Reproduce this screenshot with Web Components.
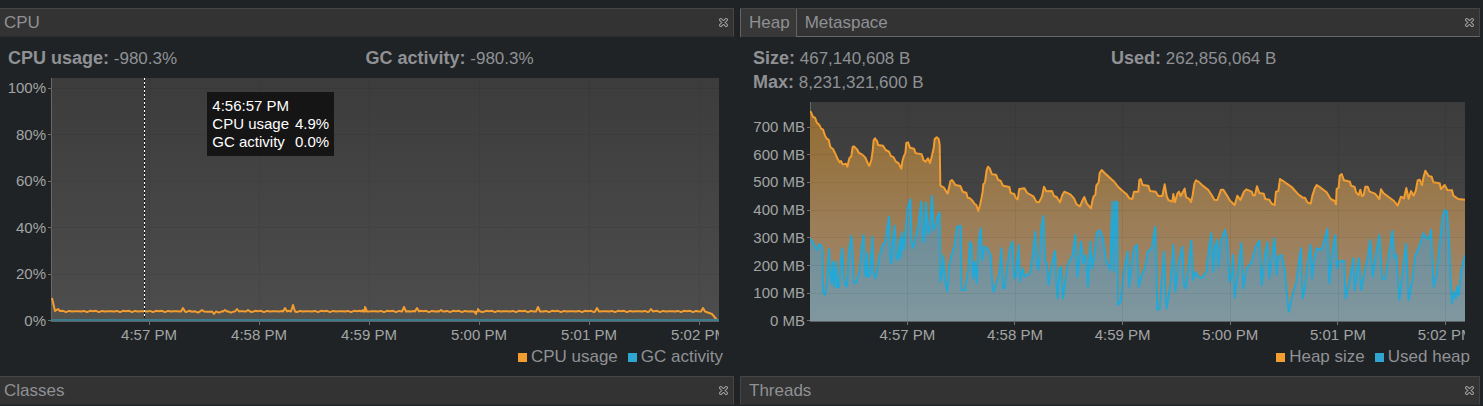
<!DOCTYPE html>
<html lang="en">
<head>
<meta charset="utf-8">
<title>Monitor</title>
<style>
  body {
    margin: 0;
    background: #1f2326;
    color: #8f9194;
    font-family: "Liberation Sans", Arial, sans-serif;
    font-size: 17px;
  }
</style>
</head>
<body>
<monitor-page></monitor-page>

<script>
/* Close mark in a panel header */
class CloseButton extends HTMLElement {
  constructor() {
    super();
    this.attachShadow({ mode: 'open' }).innerHTML = `
      <style>
        :host { display: block; }
        button { display: block; padding: 0; border: 0; background: none; cursor: pointer; }
        svg { display: block; width: 9px; height: 9px; margin-bottom: 1px; }
      </style>
      <button type="button" aria-label="Close">
        <svg viewBox="0 0 9 9" aria-hidden="true">
          <path d="M1.8 1.8 7.2 7.2M7.2 1.8 1.8 7.2" stroke="#a4a4a4" stroke-width="3.4" stroke-linecap="round"/>
          <path d="M1.8 1.8 7.2 7.2M7.2 1.8 1.8 7.2" stroke="#303030" stroke-width="1.5" stroke-linecap="round"/>
        </svg>
      </button>`;
  }
}
customElements.define('close-button', CloseButton);

/* A panel: header bar with a title or tabs, and a body */
class MonitorPanel extends HTMLElement {
  constructor() {
    super();
    const tabs = (this.getAttribute('tabs') || '').split(',').filter(Boolean);
    const title = tabs.length
      ? `<div class="tabs" role="tablist">${tabs.map((t, i) =>
          `<button type="button" role="tab" aria-selected="${i === 0}">${t}</button>`).join('')}</div>`
      : `<h2>${this.getAttribute('heading')}</h2>`;
    this.attachShadow({ mode: 'open' }).innerHTML = `
      <style>
        :host { display: flex; flex-direction: column; --pad: 8px; --end: 11px; --title: 4px; }
        :host([inset]) { --pad: 13px; --end: 10px; --title: 8px; }
        header {
          display: flex; align-items: center; justify-content: space-between;
          box-sizing: border-box; height: 29px; padding-right: 5px;
          background: #333; border: 1px solid #454545; border-bottom-color: #2b2d2e;
        }
        :host(:not([inset])) header { border-left: 0; }
        h2 { margin: 0; padding-left: var(--title); font: inherit; line-height: 27px; }
        header.tabbed { border-left: 0; border-bottom-color: #686868; }
        .tabs { display: flex; align-self: stretch; }
        .tabs button {
          padding: 0 6px 0 8px; border: 0; background: none; color: inherit; font: inherit; line-height: 27px;
        }
        .tabs button[aria-selected="true"] {
          margin-bottom: -1px; padding-bottom: 1px;
          background: #383838; border: 1px solid #646464; border-width: 0 1px;
        }
      </style>
      <header class="${tabs.length ? 'tabbed' : ''}">${title}<close-button></close-button></header>
      <slot></slot>`;
  }
}
customElements.define('monitor-panel', MonitorPanel);

/* Body of a panel: numbers, chart and legend stacked */
class PanelBody extends HTMLElement {
  constructor() {
    super();
    this.attachShadow({ mode: 'open' }).innerHTML = `
      <style>
        :host { display: flex; flex-direction: column; flex: 1; padding: 10px 0 9px; }
        .stats {
          display: grid; grid-template-columns: 1fr 1fr;
          padding: 0 11px 7px var(--pad);
        }
        .legend { display: flex; justify-content: flex-end; gap: 10px; padding-right: var(--end); }
      </style>
      <div class="stats"><slot name="stat"></slot></div>
      <slot></slot>
      <div class="legend"><slot name="key"></slot></div>`;
  }
}
customElements.define('panel-body', PanelBody);

class StatItem extends HTMLElement {
  constructor() {
    super();
    this.attachShadow({ mode: 'open' }).innerHTML = `
      <style>
        :host { display: block; line-height: 24px; white-space: nowrap; }
        b { font-size: 18px; line-height: 18px; }
      </style>
      <b>${this.getAttribute('label')}:</b> <slot></slot>`;
  }
}
customElements.define('stat-item', StatItem);

class LegendKey extends HTMLElement {
  constructor() {
    super();
    this.attachShadow({ mode: 'open' }).innerHTML = `
      <style>
        :host { display: flex; align-items: center; gap: 4px; line-height: 20px; }
        i { width: 9px; height: 9px; background: var(--swatch); }
      </style>
      <i></i><slot></slot>`;
  }
}
customElements.define('legend-key', LegendKey);

/* Values under the time cursor */
class ChartTip extends HTMLElement {
  constructor() {
    super();
    this.attachShadow({ mode: 'open' }).innerHTML = `
      <style>
        :host { display: block; padding: 5px; background: #151515; color: #fff; font-size: 15px; line-height: 18px; }
        table { border-collapse: collapse; white-space: nowrap; }
        caption { text-align: left; }
        th, td { padding: 0; font-weight: normal; text-align: left; }
        td { padding-left: 6px; text-align: right; }
      </style>
      <table>
        <caption>4:56:57 PM</caption>
        <tr><th scope="row">CPU usage</th><td>4.9%</td></tr>
        <tr><th scope="row">GC activity</th><td>0.0%</td></tr>
      </table>`;
  }
}
customElements.define('chart-tip', ChartTip);

const TIMES = ['4:57 PM', '4:58 PM', '4:59 PM', '5:00 PM', '5:01 PM', '5:02 PM'];

/* Each run of samples is [x offset, "x,y x,y ..."] in plot units */
const join = runs => runs.flatMap(([dx, pts]) => pts.trim().split(/\s+/).map(p => {
  const [x, y] = p.split(',').map(Number);
  return [x + dx, y - 21];
}));

const HEAP_SIZE = join([
  [-15, `15,48 18,52 24,66 30,68 36,84 42,88 48,100 54,104 60,122 66,132 71,134 76,156 84,162 92,178 98,192 104,202 108,198 113,208 119,207 123,206 127,215 133,190 139,183 143,156 147,154 156,163 162,174 172,179 181,188 188,204 193,213 199,195 203,168 206,135 210,130 217,140 219,150 234,152 242,165 252,170 257,182 266,187 272,199 281,205 289,221 292,199 297,182 301,175 304,144 309,142 315,158 327,161 332,175 350,178 356,196 362,200 369,190 375,204 379,190 386,160 389,132 395,127 401,132 404,150 406,272 417,278 428,296 432,278 436,259 441,255 447,263 451,270 466,273 473,290 484,293 488,308`],
  [480, `0,310 8,318 14,327 19,330 25,348 30,330 34,312 38,290 40,268 45,262 50,225 54,215 59,220 66,238 78,239 84,254 92,258 99,272 118,276 122,294 133,297 138,310 143,313 148,282 163,280 172,294 190,304 199,320 207,322 216,304 222,275 229,289 246,288 252,303 260,306 270,322 277,300 283,290 301,298 312,310 320,328 330,334 338,315 343,306 350,325 363,340 367,318 371,304 376,300 379,272 386,262 389,234 395,225 408,238 421,250 434,262 445,276 458,288 470,298 478,310 487,312 492,290`],
  [975, `0,290 10,290 13,255 17,252 23,270 40,272 45,288 62,290 70,303 82,303 89,268 95,303 100,315 112,320 115,297 120,322 127,296 132,290 137,303 149,281 153,306 163,312 168,321 173,300 178,266 183,256 193,262 203,272 220,285 230,300 238,314 247,315 258,284 265,284 275,300 286,318 299,330 307,302 316,315 327,290 334,283 350,290 355,302 360,300 366,274 373,294 386,296 391,312 403,314 410,326 419,330 423,290 430,288 435,252 450,262 470,276 488,296`],
  [1470, `0,302 8,308 15,308 22,322 32,326 37,302 45,278 50,270 62,278 80,292 92,312 104,318 108,328 110,282 116,278 119,242 125,237 132,256 150,260 153,272 164,276 168,292 176,300 181,284 186,304 191,300 196,275 203,275 209,290 225,296 238,312 243,283 250,294 262,303 282,318 293,332 303,305 312,310 319,279 326,311 333,288 341,302 347,288 353,256 359,254 366,270 371,245 376,227 386,243 395,245 400,262 419,265 423,282 434,270 442,285 456,286 460,302 475,312 495,314`],
]);

const HEAP_USED = join([
  [-15, `15,430 18,435 24,442 30,455 36,465 42,448 48,450 52,465 54,590 60,600 66,560 72,462 76,540 80,565 84,500 88,575 93,500 97,578 102,575 107,500 112,460 116,545 121,570 126,575 131,480 139,423 144,500 147,565 155,560 163,530 170,460 176,420 180,535 183,545 187,475 190,545 196,540 202,425 206,535 211,550 218,520 224,480 232,452 241,440 247,400 252,365 256,495 260,505 264,440 269,392 275,490 280,495 285,430 287,485 291,412 296,465 303,400 308,340 316,313 320,440 324,458 332,430 340,390 349,320 354,430 357,442 363,323 369,415 373,410 381,303 386,405 393,390 397,365 404,353 406,560 411,545 415,482 421,560 427,590 433,510 440,480 448,455 456,395 467,393 470,585 480,585 490,520`],
  [480, `0,440 5,450 9,550 14,500 20,565 26,440 32,400 37,495 43,455 52,460 62,480 68,580 71,590 80,560 88,535 94,460 99,580 104,580 111,520 120,460 127,440 133,550 138,545 146,450 150,560 158,520 164,545 180,535 188,480 196,410 200,500 205,525 210,470 214,400 220,363 225,495 230,505 236,570 243,520 255,468 259,560 263,610 269,520 274,515 279,610 286,560 293,510 308,480 316,420 322,545 328,490 333,440 340,505 347,480 354,575 361,440 366,520 375,470 380,415 388,405 398,425 408,495 421,525 427,320 432,530 436,320 442,322 444,630 452,620 460,540 473,470 478,575 490,470`],
  [975, `0,455 6,450 11,575 20,540 30,520 38,470 50,460 61,395 67,645 74,640 80,560 87,470 92,600 95,640 106,570 115,450 121,590 130,510 142,455 147,570 152,580 160,520 169,437 174,555 182,530 190,545 200,550 214,530 222,460 229,415 235,530 239,460 246,435 251,515 257,440 270,405 277,440 283,560 290,540 294,480 299,608 310,520 319,445 325,580 335,520 350,500 362,455 373,437 380,570 390,480 397,442 403,550 410,490 418,430 425,540 430,485 440,480 450,530 455,590 461,650 470,610 484,560 492,500`],
  [1470, `3,460 8,610 15,580 22,510 32,450 36,550 43,490 50,460 64,465 75,430 82,402 88,565 97,470 106,420 111,520 116,500 132,497 137,610 148,560 160,490 164,585 170,540 177,490 183,585 192,540 203,490 211,435 218,545 228,480 238,420 247,553 256,550 268,470 277,408 284,490 289,480 298,615 307,540 318,447 326,615 336,560 346,480 358,455 370,415 380,430 388,430 393,405 401,575 410,540 420,440 428,365 434,345 441,350 447,440 452,560 456,625 463,590 468,610 471,575 476,600 483,530 495,480`],
]);

/* Idle load with a few short bursts, x -> y in plot units */
const BURSTS = { 132: 230, 151: 232, 163: 236, 174: 232, 186: 231, 197: 232, 234: 230, 242: 227, 312: 232, 314: 229, 353: 229, 366: 230, 390: 232, 425: 236, 427: 231, 487: 229, 546: 230, 600: 231, 652: 230 };
const CPU_USAGE = (() => {
  const pts = [[1, 220], [4, 233], [7, 231], [9, 233]];
  for (let x = 12, k = 0; x < 656; x += 3, k++) {
    const near = Object.keys(BURSTS).some(b => Math.abs(b - x) < 3);
    const jitter = ((k * k * 7 + k * 3) % 11) / 11 - 0.5;
    if (!near) pts.push([x, 233.5 + jitter * 1.4 + (x > 140 && x < 185 ? 0.5 : 0)]);
  }
  for (const b in BURSTS) pts.push([+b - 2, 233.5], [+b, BURSTS[b]], [+b + 2, 233.5]);
  pts.sort((a, b) => a[0] - b[0]);
  pts.push([661, 236], [666, 242]);
  return pts;
})();

const CHARTS = {
  cpu: {
    w: 668, h: 243, top: 10, first: 98, step: 110, gutter: 51,
    y: ['100%', '80%', '60%', '40%', '20%', '0%'],
    series: [
      { id: 'usage', pts: CPU_USAGE, line: '#f19d30', from: '#4b4a48', to: '#55514c' },
      { id: 'gc', pts: [[0, 242], [668, 242]], line: '#3a7b8e', from: 'none', to: 'none' },
    ],
  },
  heap: {
    w: 1965, h: 657, top: 25, first: 292, step: 323, gutter: 70,
    y: ['700 MB', '600 MB', '500 MB', '400 MB', '300 MB', '200 MB', '100 MB', '0 MB'],
    series: [
      { id: 'size', pts: HEAP_SIZE, line: '#f19d30', from: '#926a2e', to: '#a38d78' },
      { id: 'used', pts: HEAP_USED, line: '#22a9d8', from: '#56808d', to: '#80979f' },
    ],
  },
};

class TimeChart extends HTMLElement {
  constructor() {
    super();
    const c = CHARTS[this.getAttribute('data')];
    const unit = c.w > 1000 ? 3 : 1;
    const top = c.top * unit;
    const rows = c.y.map((_, i) => top + (c.h - top) * i / (c.y.length - 1)).slice(0, -1);
    const cols = TIMES.map((_, i) => c.first + c.step * i);
    const grid = [...rows.map(y => `M0 ${y}H${c.w}`), ...cols.map(x => `M${x} 0V${c.h}`)].join('');
    const drawn = c.series.map(s => {
      const d = 'M' + s.pts.map(p => p.join(' ')).join('L');
      const last = s.pts[s.pts.length - 1][0];
      return `<linearGradient id="${s.id}" gradientUnits="userSpaceOnUse" x1="0" y1="0" x2="0" y2="${c.h}">
          <stop offset="0" stop-color="${s.from}"/><stop offset="1" stop-color="${s.to}"/></linearGradient>
        ${s.from === 'none' ? '' : `<path fill="url(#${s.id})" d="${d}L${last} ${c.h}L${s.pts[0][0]} ${c.h}Z"/>`}
        <path class="line" stroke="${s.line}" d="${d}"/>`;
    }).join('');
    const lead = (c.first - c.step / 2) / c.w * 100;
    const cell = c.step / c.w * 100;

    this.attachShadow({ mode: 'open' }).innerHTML = `
      <style>
        :host {
          display: grid; flex: 1; grid-template: minmax(219px, 1fr) auto / ${c.gutter}px 1fr;
          padding-right: 15px; color: #a3a5a5; font-size: 15px; line-height: 18px; white-space: nowrap;
        }
        .y {
          display: flex; flex-direction: column; justify-content: space-between;
          margin: ${c.top - 9}px 0 -9px;
        }
        .y span { display: flex; align-items: center; justify-content: flex-end; gap: 2px; }
        .y span::after { content: ""; width: 3px; height: 1px; background: #707272; }
        .plot {
          position: relative; min-width: 0;
          background: linear-gradient(#3c3c3c, #4d4d4d);
          box-shadow: inset 1px 0 #686868, 0 1px #5d6365;
        }
        svg { position: absolute; inset: 0; width: 100%; height: 100%; overflow: hidden; }
        path { vector-effect: non-scaling-stroke; }
        .line { fill: none; stroke-width: 2; stroke-linejoin: round; }
        .grid { fill: none; stroke: #000; stroke-opacity: .06; shape-rendering: crispEdges; }
        .x { grid-column: 2; display: flex; min-width: 0; overflow: hidden; padding-top: 1px; }
        .x::before { content: ""; flex: 0 0 ${lead}%; }
        .x span {
          flex: 0 0 ${cell}%; padding: 4px 0; line-height: 17px; text-align: center;
          background: linear-gradient(#707272, #707272) 50% 0 / 1px 3px no-repeat;
        }
        ::slotted(.cursor) {
          position: absolute; top: 0; bottom: 3px; left: 13.9%; width: 1px;
          background: repeating-linear-gradient(#fff 0 2px, #111 2px 4px);
        }
        ::slotted(chart-tip) { position: absolute; top: 14px; left: 23.4%; }
      </style>
      <div class="y">${c.y.map(t => `<span>${t}</span>`).join('')}</div>
      <div class="plot">
        <svg viewBox="0 0 ${c.w} ${c.h}" preserveAspectRatio="none" aria-hidden="true">
          ${drawn}<path class="grid" d="${grid}"/>
        </svg>
        <slot></slot>
      </div>
      <div class="x">${TIMES.map(t => `<span>${t}</span>`).join('')}</div>`;
  }
}
customElements.define('time-chart', TimeChart);

class MonitorPage extends HTMLElement {
  constructor() {
    super();
    this.attachShadow({ mode: 'open' }).innerHTML = `
      <style>
        :host {
          display: grid; grid-template-columns: 734fr 740fr; column-gap: 6px;
          padding: 8px 3px 0 0;
        }
        .a { --swatch: #f19d30; }
        .b { --swatch: #2fa5d2; }
      </style>
      <monitor-panel heading="CPU">
        <panel-body>
          <stat-item slot="stat" label="CPU usage">-980.3%</stat-item>
          <stat-item slot="stat" label="GC activity">-980.3%</stat-item>
          <time-chart data="cpu"><div class="cursor"></div><chart-tip></chart-tip></time-chart>
          <legend-key slot="key" class="a">CPU usage</legend-key>
          <legend-key slot="key" class="b">GC activity</legend-key>
        </panel-body>
      </monitor-panel>
      <monitor-panel inset tabs="Heap,Metaspace">
        <panel-body>
          <stat-item slot="stat" label="Size">467,140,608 B</stat-item>
          <stat-item slot="stat" label="Used">262,856,064 B</stat-item>
          <stat-item slot="stat" label="Max">8,231,321,600 B</stat-item>
          <time-chart data="heap"></time-chart>
          <legend-key slot="key" class="a">Heap size</legend-key>
          <legend-key slot="key" class="b">Used heap</legend-key>
        </panel-body>
      </monitor-panel>
      <monitor-panel heading="Classes"></monitor-panel>
      <monitor-panel inset heading="Threads"></monitor-panel>`;
  }
}
customElements.define('monitor-page', MonitorPage);
</script>
</body>
</html>
